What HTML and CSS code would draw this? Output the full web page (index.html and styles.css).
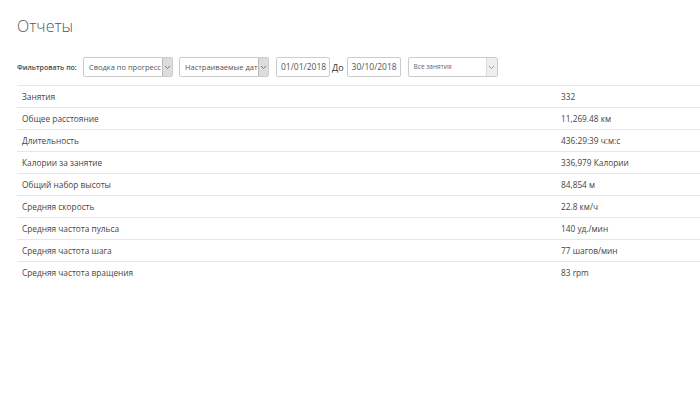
FILE: index.html
```html
<!DOCTYPE html>
<html lang="ru">
<head>
<meta charset="UTF-8">
<meta name="viewport" content="width=device-width, initial-scale=1.0">
<title>Отчеты</title>
<link rel="stylesheet" href="styles.css">
</head>
<body>

<div class="reports">
  <h1>Отчеты</h1>

  <div class="filters">
    <span class="filter-label">Фильтровать по:</span>
    <div class="select">
      <span class="select-text">Сводка по прогресс</span>
      <span class="select-arrow"><svg width="7" height="5" viewBox="0 0 7 5"><path d="M1 1 L3.5 3.5 L6 1" fill="none" stroke="#777" stroke-width="1"/></svg></span>
    </div>
    <div class="select">
      <span class="select-text">Настраиваемые дат</span>
      <span class="select-arrow"><svg width="7" height="5" viewBox="0 0 7 5"><path d="M1 1 L3.5 3.5 L6 1" fill="none" stroke="#777" stroke-width="1"/></svg></span>
    </div>
    <div class="date">01/01/2018</div>
    <span class="date-sep">До</span>
    <div class="date">30/10/2018</div>
    <div class="select select-wide">
      <span class="select-text small">Все занятия</span>
      <span class="select-arrow light"><svg width="7" height="5" viewBox="0 0 7 5"><path d="M1 1 L3.5 3.5 L6 1" fill="none" stroke="#888" stroke-width="0.8"/></svg></span>
    </div>
  </div>

  <table class="summary">
    <tr><td class="name">Занятия</td><td>332</td></tr>
    <tr><td class="name">Общее расстояние</td><td>11,269.48 км</td></tr>
    <tr><td class="name">Длительность</td><td>436:29:39 ч:м:с</td></tr>
    <tr><td class="name">Калории за занятие</td><td>336,979 Калории</td></tr>
    <tr><td class="name">Общий набор высоты</td><td>84,854 м</td></tr>
    <tr><td class="name">Средняя скорость</td><td>22.8 км/ч</td></tr>
    <tr><td class="name">Средняя частота пульса</td><td>140 уд./мин</td></tr>
    <tr><td class="name">Средняя частота шага</td><td>77 шагов/мин</td></tr>
    <tr><td class="name">Средняя частота вращения</td><td>83 rpm</td></tr>
  </table>
</div>

</body>
</html>
```

FILE: styles.css
```css
body {
  font-family: "Open Sans", Arial, sans-serif;
  background-color: #fff;
  color: #444;
  margin: 0;
}

.reports {
  padding: 14px 0 0 17px;
}

h1 {
  font-size: 16px;
  font-weight: 300;
  color: #555;
  line-height: 24px;
  margin: 0 0 19px 0;
}

.filters {
  display: flex;
  align-items: center;
  height: 20px;
}

.filter-label {
  font-size: 7px;
  font-weight: 600;
  color: #444;
  width: 66px;
}

.select {
  display: flex;
  align-items: stretch;
  width: 90px;
  height: 20px;
  box-sizing: border-box;
  border: 1px solid #ccc;
  border-radius: 2px;
  background: #fff;
  margin-right: 6px;
}

.select-wide {
  margin-left: 7px;
}

.select-text {
  flex: 1;
  font-size: 7.5px;
  color: #555;
  line-height: 18px;
  padding-left: 5px;
  white-space: nowrap;
  overflow: hidden;
}

.select-text.small {
  font-size: 6.5px;
  color: #666;
}

.select-arrow {
  width: 9px;
  background: #ddd;
  border-left: 1px solid #bbb;
  display: flex;
  align-items: center;
  justify-content: center;
}

.select-arrow.light {
  width: 10px;
  background: #eee;
  border-left: 1px solid #ddd;
}

.date {
  width: 54px;
  height: 20px;
  box-sizing: border-box;
  border: 1px solid #ccc;
  border-radius: 2px;
  font-size: 8.5px;
  color: #555;
  line-height: 18px;
  padding-left: 4px;
  margin-left: 1px;
}

.date-sep {
  font-size: 9px;
  color: #333;
  margin: 0 2px 0 2px;
}

.summary {
  border-collapse: collapse;
  width: 683px;
  margin-top: 8px;
  font-size: 8.3px;
  color: #444;
}

.summary td {
  height: 22px;
  padding: 0 5px;
  border-top: 1px solid #e6e6e6;
  box-sizing: border-box;
}

.summary .name {
  width: 539px;
}
```
